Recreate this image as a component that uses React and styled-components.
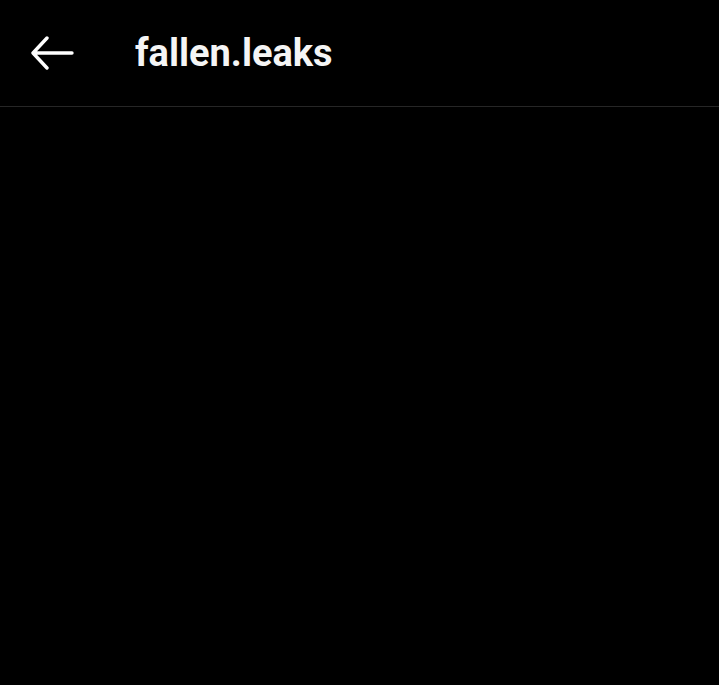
import React from "react";
import styled, { createGlobalStyle } from "styled-components";

const GlobalStyle = createGlobalStyle`
  html, body {
    margin: 0;
    padding: 0;
    background: #000;
  }
  body {
    font-family: Roboto, "Noto Sans", "Liberation Sans", sans-serif;
  }
`;

const Page = styled.div`
  width: 100%;
  height: 100vh;
  background: #000;
  display: flex;
  flex-direction: column;
`;

const Header = styled.header`
  height: 107px;
  display: flex;
  align-items: center;
  border-bottom: 1px solid #262626;
  box-sizing: border-box;
  padding-left: 30px;
`;

const BackButton = styled.button`
  width: 46px;
  height: 40px;
  padding: 0;
  border: none;
  background: none;
  display: flex;
  align-items: center;
  justify-content: flex-start;
  cursor: pointer;
  margin-right: 59px;
`;

const Title = styled.h1`
  margin: 0;
  color: #f5f5f5;
  font-size: 38px;
  font-weight: 700;
  line-height: 1;
`;

const Body = styled.main`
  flex: 1;
`;

const BackArrow = () => (
  <svg width="44" height="34" viewBox="0 0 44 34" fill="none">
    <path
      d="M42 17H4M17 2L3 17l14 15"
      stroke="#fff"
      strokeWidth="3.4"
      strokeLinecap="round"
      strokeLinejoin="round"
    />
  </svg>
);

export default function App() {
  return (
    <Page>
      <GlobalStyle />
      <Header>
        <BackButton aria-label="Back">
          <BackArrow />
        </BackButton>
        <Title>fallen.leaks</Title>
      </Header>
      <Body />
    </Page>
  );
}
